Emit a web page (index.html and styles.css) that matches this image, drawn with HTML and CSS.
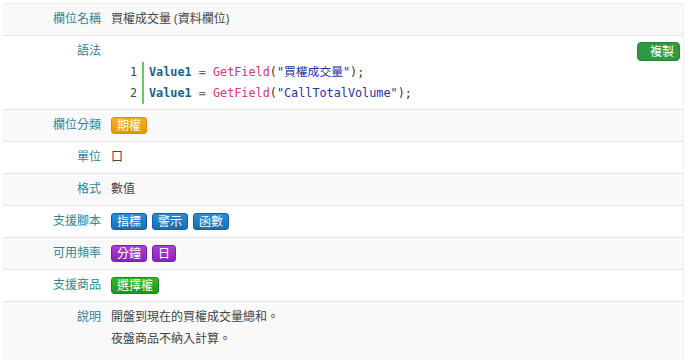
FILE: index.html
```html
<!DOCTYPE html>
<html lang="zh-Hant">
<head>
    <meta charset="UTF-8">
    <meta name="viewport" content="width=device-width, initial-scale=1.0">
    <title>買權成交量</title>
    <link rel="stylesheet" href="styles.css">
</head>
<body>
    <div class="field-table">
        <div class="row odd">
            <div class="label">欄位名稱</div>
            <div class="value">買權成交量 (資料欄位)</div>
        </div>
        <div class="row">
            <div class="label">語法</div>
            <div class="value">
                <div class="syntax-top"><button class="copy-btn">複製</button></div>
                <div class="code">
                    <div class="gutter"><div>1</div><div>2</div></div>
                    <div class="lines">
                        <div><span class="var">Value1</span> <span class="op">=</span> <span class="fn">GetField</span>(<span class="str">"買權成交量"</span>);</div>
                        <div><span class="var">Value1</span> <span class="op">=</span> <span class="fn">GetField</span>(<span class="str">"CallTotalVolume"</span>);</div>
                    </div>
                </div>
            </div>
        </div>
        <div class="row odd">
            <div class="label">欄位分類</div>
            <div class="value"><span class="badge orange">期權</span></div>
        </div>
        <div class="row">
            <div class="label">單位</div>
            <div class="value">口</div>
        </div>
        <div class="row odd">
            <div class="label">格式</div>
            <div class="value">數值</div>
        </div>
        <div class="row">
            <div class="label">支援腳本</div>
            <div class="value badges">
                <span class="badge blue">指標</span>
                <span class="badge blue">警示</span>
                <span class="badge blue">函數</span>
            </div>
        </div>
        <div class="row odd">
            <div class="label">可用頻率</div>
            <div class="value badges">
                <span class="badge purple">分鐘</span>
                <span class="badge purple">日</span>
            </div>
        </div>
        <div class="row">
            <div class="label">支援商品</div>
            <div class="value"><span class="badge green">選擇權</span></div>
        </div>
        <div class="row odd last">
            <div class="label">說明</div>
            <div class="value">
                <div>開盤到現在的買權成交量總和。</div>
                <div>夜盤商品不納入計算。</div>
            </div>
        </div>
    </div>
</body>
</html>
```

FILE: styles.css
```css
body { margin: 0; background: #fff; font-family: "Open Sans", "Noto Sans CJK TC", sans-serif; font-size: 12px; color: #444; }
.field-table { margin: 3px 6px 0 3px; border-top: 1px solid #eee; border-right: 1px solid #eee; }
.row { display: grid; grid-template-columns: 98px 1fr; column-gap: 10px; padding: 4px 0 5px; line-height: 22px; border-bottom: 1px solid #e4e4e4; background: #fff; }
.row.odd { background: #f9f9f9; }
.row.last { border-bottom: none; padding-bottom: 10px; }
.label { text-align: right; color: #2f8494; }
.value { color: #444; }
.syntax-top { height: 22px; display: flex; justify-content: flex-end; align-items: center; padding-right: 3px; }
.copy-btn { font: inherit; font-size: 12px; line-height: 17px; color: #fff; background: #2d9a3f; border: 1px solid #23843a; border-radius: 4px; padding: 0 5px 0 12px; }
.code { display: flex; margin-left: 10px; font-family: "DejaVu Sans Mono", "Noto Sans CJK TC", monospace; font-size: 11.8px; line-height: 21px; color: #333; }
.gutter { width: 16px; text-align: right; padding-right: 5px; border-right: 2px solid #5bd35b; color: #444; }
.lines { padding-left: 5px; }
.var { color: #1d5f8e; font-weight: bold; }
.op { color: #666; }
.fn { color: #e0337b; }
.str { color: #2233aa; }
.badges { display: flex; gap: 5px; align-items: center; }
.badge { display: inline-block; line-height: 15px; padding: 0 5px; border-radius: 3px; color: #fff; border: 1px solid; vertical-align: middle; }
.orange { background: linear-gradient(#f5b21f, #e8950b); border-color: #d88a08; }
.blue { background: linear-gradient(#2a8ed6, #1a6db3); border-color: #155f9e; }
.purple { background: linear-gradient(#ac3fd9, #8a24b9); border-color: #7a1fa6; }
.green { background: linear-gradient(#2fb82f, #1a9a1a); border-color: #168a16; }
```
